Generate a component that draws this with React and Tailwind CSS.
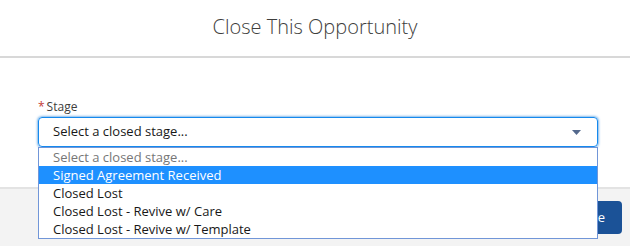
import React, { useState } from 'react';

const stages = [
  'Signed Agreement Received',
  'Closed Lost',
  'Closed Lost - Revive w/ Care',
  'Closed Lost - Revive w/ Template',
];

const App = () => {
  const [selected] = useState(0); // highlighted option in the open list

  return (
    <div
      className="relative w-[630px] h-[246px] overflow-hidden bg-white flex flex-col"
      style={{ fontFamily: '"Open Sans", "Noto Sans", sans-serif' }}
    >
      {/* Modal header */}
      <div className="h-[58px] shrink-0 flex items-center justify-center border-b-2 border-[#d8d8d8]">
        <h2 className="text-[20px] font-light text-[#3e3e3c] pb-[2px]">
          Close This Opportunity
        </h2>
      </div>

      {/* Body with the stage picker */}
      <div className="h-[129px] shrink-0 pl-[38px] pr-[32px] pt-[40px]">
        <label className="flex items-center h-[18px] mb-[1px] text-[12px] text-[#3e3e3c]">
          <span className="text-[#c23934] mr-[2px]">*</span>
          Stage
        </label>

        <div className="relative z-10">
          <div className="h-[30px] flex items-center justify-between rounded-[4px] border border-[#1589ee] shadow-[0_0_3px_#0070d2] pl-[14px] pr-[16px] text-[13px] text-[#181818]">
            <span>Select a closed stage...</span>
            <svg width="9" height="5" viewBox="0 0 9 5" className="mt-[1px]">
              <path d="M0 0 H9 L4.5 5 Z" fill="#54698d" />
            </svg>
          </div>

          {/* Open native-style option list */}
          <ul className="absolute left-0 right-0 top-full border border-[#7196d8] bg-white text-[13px] leading-[18px]">
            <li className="h-[18px] pl-[14px] text-[#767676]">Select a closed stage...</li>
            {stages.map((s, i) => (
              <li
                key={s}
                className={
                  i === selected
                    ? 'h-[18px] pl-[14px] bg-[#1e90ff] text-white'
                    : 'h-[18px] pl-[14px] text-[#181818]'
                }
              >
                {s}
              </li>
            ))}
          </ul>
        </div>
      </div>

      {/* Modal footer */}
      <div className="flex-1 border-t-2 border-[#e3e3e3] bg-[#f3f3f3] flex justify-end items-start pt-[12px] pr-[8px]">
        <button className="h-[33px] pl-[16px] pr-[17px] rounded-[4px] bg-[#1b5297] text-white text-[13px]">
          Save
        </button>
      </div>
    </div>
  );
};

export default App;
